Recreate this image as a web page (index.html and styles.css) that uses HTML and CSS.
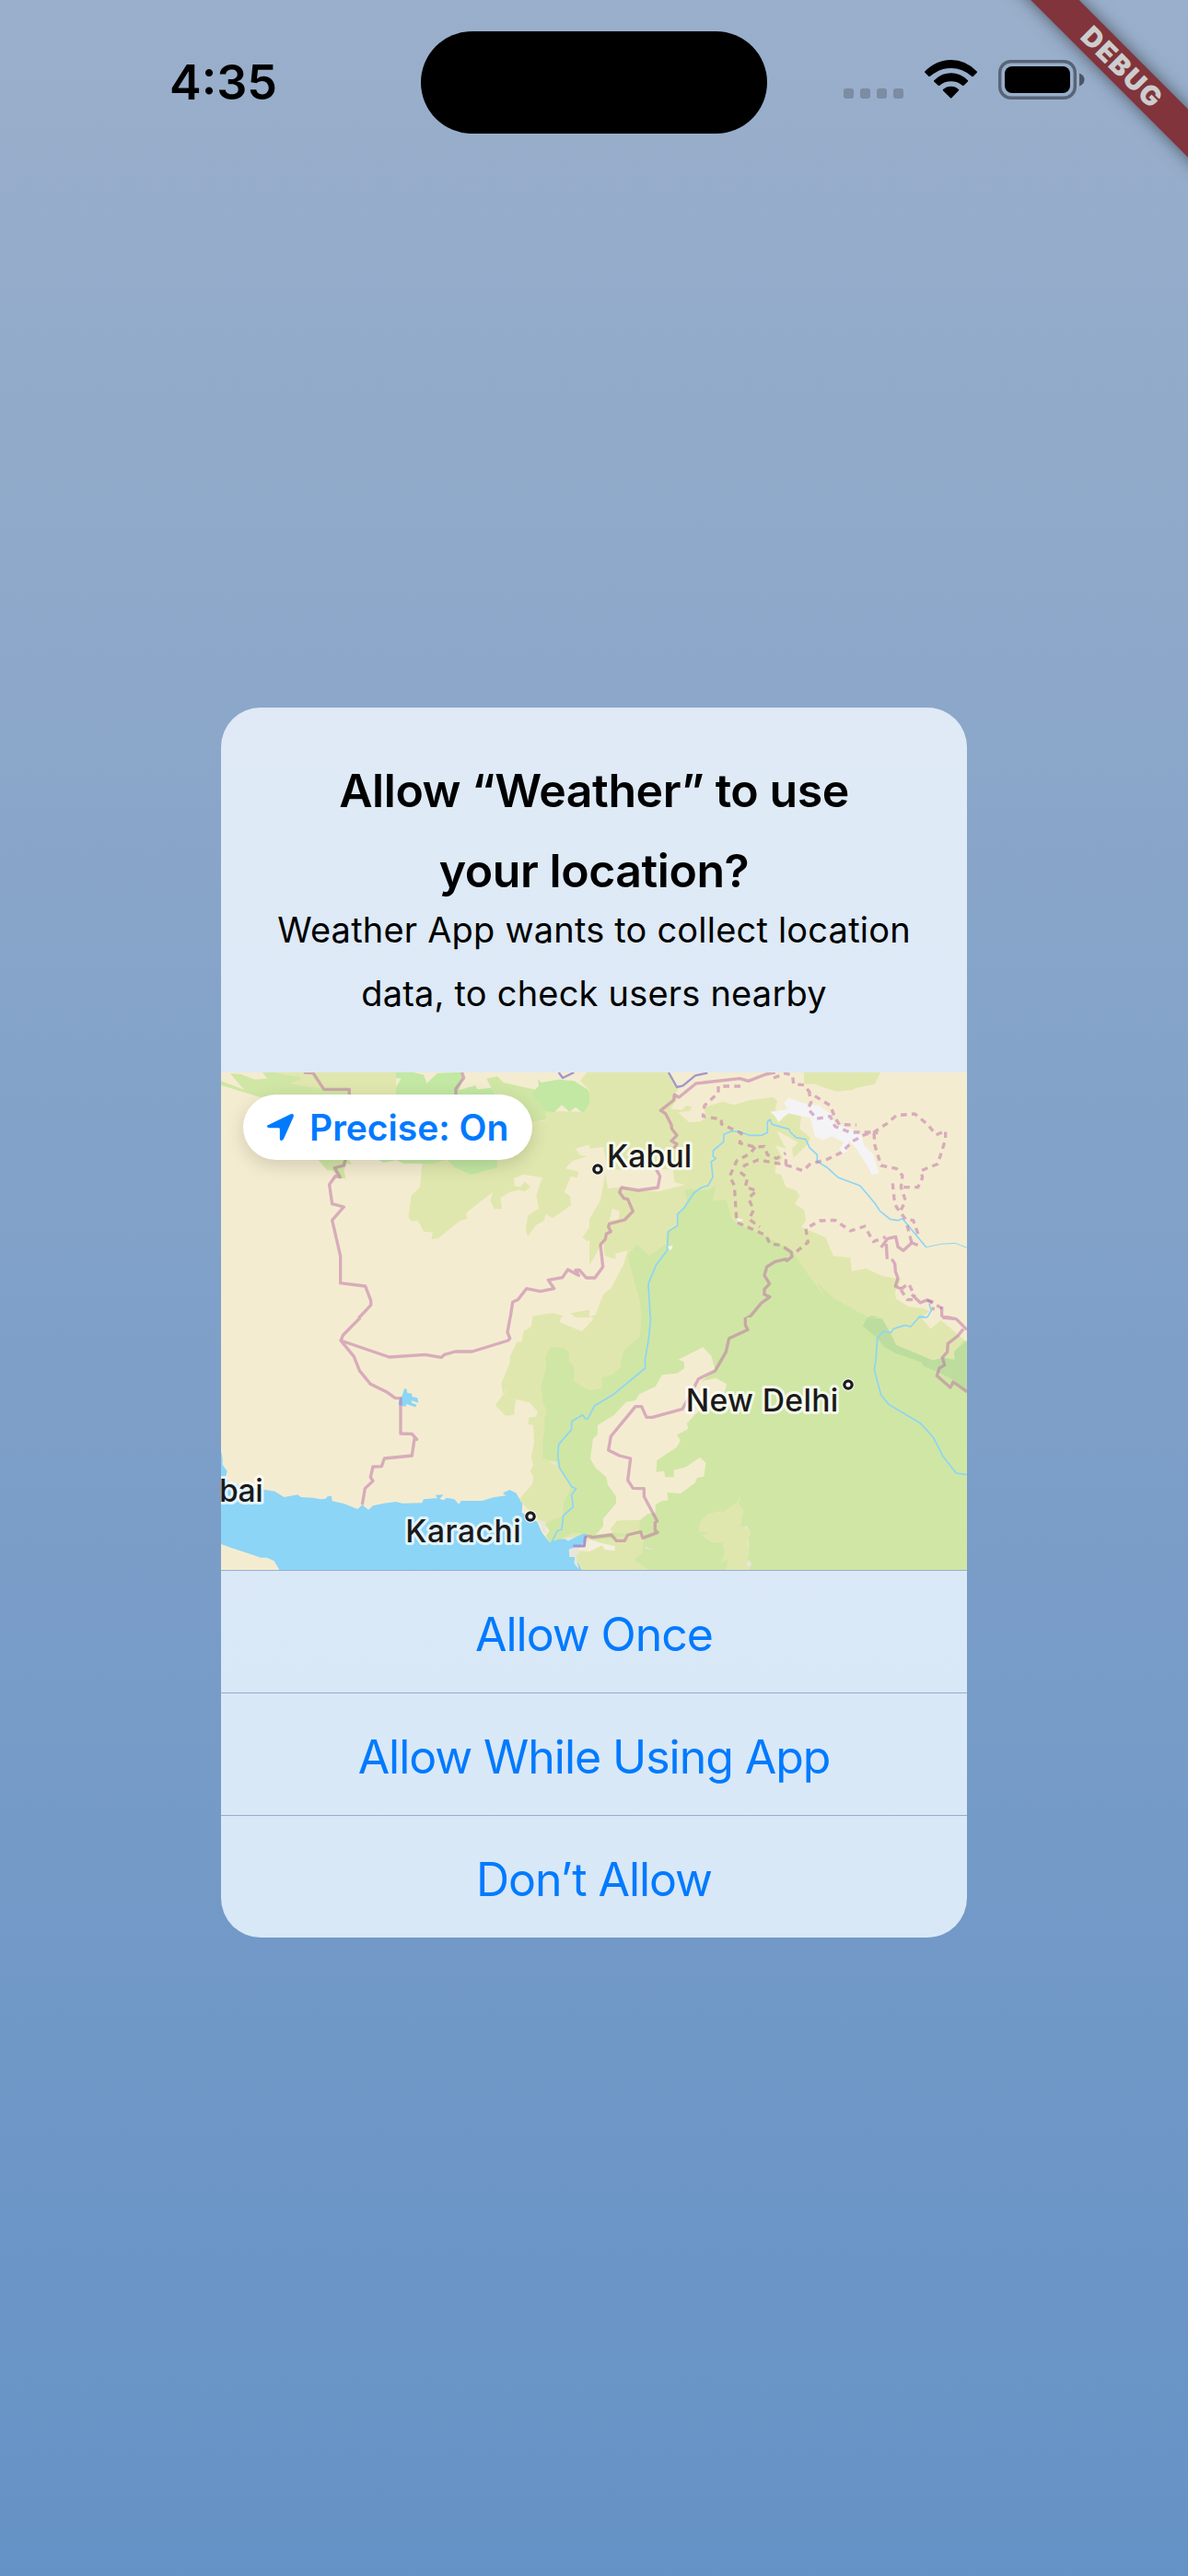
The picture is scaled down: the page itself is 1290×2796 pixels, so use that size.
FILE: index.html
```html
<!DOCTYPE html>
<html lang="en">
<head>
<meta charset="utf-8">
<title>Weather</title>
<link rel="stylesheet" href="styles.css">
</head>
<body>
<div class="screen">
  <header class="status">
    <div class="status-side"><span class="clock">4:35</span></div>
    <div class="island"></div>
    <div class="status-side status-icons">
      <svg class="signal" viewBox="0 0 65 11"><rect width="11" height="11" rx="3"/><rect x="18" width="11" height="11" rx="3"/><rect x="36" width="11" height="11" rx="3"/><rect x="54" width="11" height="11" rx="3"/></svg>
      <svg class="wifi" viewBox="0 0 171 126"><path d="M0 38Q38 0 86 0T171 38Q172 40 170 42L158 54Q156 56 154 54Q124 27 86 27T17 54Q15 55 13 53L1 41Q-1 39 0 38Z"/><path d="M31 67Q55 43 86 43T141 67Q142 69 140 71L127 84Q125 85 123 83Q107 70 86 70T49 83Q47 85 45 84L31 71Q29 69 31 67Z"/><path d="M60 96Q71 86 86 86T111 96Q113 98 111 100L88 124Q86 126 84 124L61 101Q58 98 60 96Z"/></svg>
      <svg class="battery" viewBox="0 0 94 43"><rect x="1.7" y="1.7" width="81.6" height="39.6" rx="12" fill="none" stroke="#000" stroke-opacity=".42" stroke-width="3.4"/><rect x="7" y="7" width="71" height="29" rx="8"/><path d="M88 14.5Q93.5 16.5 93.5 21.5T88 28.5Z" fill-opacity=".5"/></svg>
    </div>
  </header>
  <div class="debug"><span>DEBUG</span></div>

  <main class="dialog">
    <section class="message">
      <h1>Allow “Weather” to use<br>your location?</h1>
      <p>Weather App wants to collect location<br>data, to check users nearby</p>
    </section>

    <div class="map">
      <svg class="map-art" viewBox="30 42 2430 1620">
        <!-- north-west tile -->
        <svg width="1230" height="840" viewBox="0 0 1230 840">
          <path class="desert" d="M0 0H1230V840H0Z"/>
          <path class="green" d="M30 70 105 98 90 82 60 45 95 48 140 65 180 62 165 42H600V115L155 122 30 84Z"/>
          <path class="olive" d="M205 42H600V115H450L445 97H365L252 78 285 68 290 58 240 50ZM655 42 690 50 700 78 735 45 815 42 795 95 795 115H600L700 78Z"/>
          <path class="mint" d="M600 42H655L690 50 700 78 735 45 810 42 818 60 805 100 858 84 865 97 910 92 925 115H600V90L617 62 600 60Z"/>
          <path class="green" d="M895 62 930 55 950 75 1060 100 1090 140 1090 195 1045 205 950 113H925L910 92Z"/>
          <path class="olive" d="M1200 70 1222 42H1230V280L1222 279 1185 290 1200 312 1225 315 1175 330 1152 355 1195 365 1190 385 1170 380 1148 432 1168 445 1170 475 1110 517 1088 503 1082 525 1055 540 1030 577 1022 555 1030 508 1065 485 1057 440 1077 385 1015 374 985 387V412L1005 415 1020 398 1038 415 1020 430 1000 425 970 432 940 450 945 487H920L908 460 915 432 828 500 832 518 805 527 738 582 715 586 720 563 690 560 672 525 650 527 640 513 650 443 678 415 682 375 686 330 1000 250 1045 205 1090 197V168L1210 170 1230 100Z"/>
          <path class="mint" d="M1043 110 1065 85 1062 63 1073 75 1130 65 1180 70 1228 100 1231 140 1210 175 1185 155 1165 170 1140 148 1115 172 1090 168ZM765 325H930L928 352 845 375 790 350ZM540 325H770L720 339 625 338 600 328 560 336Z"/>
          <path class="green" d="M345 325H445L455 341 440 338 430 360 436 388H415L395 362 375 360Z"/>
          <path class="olive" d="M1230 545 1208 580 1222 592 1230 588ZM1040 840 1050 835 1110 825 1145 835 1140 840ZM1168 826 1230 815V840H1185Z"/>
          <path class="border-water" d="M1130 42 1143 60 1180 42"/>
          <path class="border" d="M300 42 330 44 365 97H448V115M815 42 821 60 795 95V114M435 326 430 345 400 353 418 383 402 380 383 407 392 470 430 480 392 523 419 640V728L500 738 518 785V800L452 870M968 870 980 790 997 782 1025 746 1070 755 1115 746 1096 718 1142 710 1160 684 1195 703 1185 686 1197 685 1220 711H1250"/>
        </svg>
        <!-- north-east tile -->
        <svg x="1230" width="1230" height="840" viewBox="0 0 1230 840">
          <path class="desert" d="M0 0H1230V840H0Z"/>
          <path class="olive" d="M0 42H258L290 92 278 118 290 122 265 160 300 165 315 150 335 155 325 168 290 172 325 205 360 202 385 185 370 160 390 150 435 137 470 148 520 133 600 122 612 135 605 165 690 185 685 225 720 255 712 275 665 320 660 290 680 270 610 232 640 290 605 280 630 320 608 345 605 370 625 375 640 415 672 425 685 445 670 470 700 490 705 525 690 545 770 580 795 640 850 645 855 690 900 680 955 705 1015 715 995 760 1000 780 1040 805 1085 810 1110 820 1080 840H0Z"/>
          <path class="olive" d="M698 42H948L930 80 870 92 855 100 805 104 760 90 735 80 700 80Z"/>
          <path class="desert" d="M0 290 45 285 60 360 220 355 272 360 278 400 310 408 225 430 140 425 110 415 60 420 52 372 35 460 0 520ZM75 485 98 495 95 520 65 525ZM0 670 45 595 50 640 85 650 85 632 125 622 110 670 70 745 45 765 20 830 0 840Z"/>
          <path class="green" d="M310 425 325 422 385 425 412 410 402 460 445 457 465 520 480 535 575 575 660 620 705 690 770 778 740 725 800 780 910 840H170L165 790 140 700 125 640 155 600 195 640 250 600 250 560 285 540 290 500 320 470Z"/>
          <path class="forest" d="M890 845 920 835 945 840 965 870Z"/>
          <path class="ice" d="M590 170 645 163 635 140 648 125 720 150 745 148 790 180 800 210 850 225 885 245 895 280 925 310 943 370 920 375 905 345 870 290 845 265 838 300 825 305 815 290 830 270 790 250 760 262 735 250 720 190 650 175 635 185 617 204 605 185ZM480 515 502 522 485 530ZM253 610 272 605 265 622Z"/>
          <path class="river" d="M200 870 192 730 217 670 253 622 257 560 287 541V503L307 485 340 435 362 418 387 410 402 383 397 333 412 322 403 315V297L437 268 438 244 460 234H485L522 247H562L580 238V203L588 195 595 211 650 227 655 237 673 254 705 260 717 287 742 310V332L775 352 810 384 882 411 930 468 947 494 980 520 1005 524 1020 518 1097 611M1107 795 1114 818 1100 840 1077 836 1047 868"/>
          <path class="river thin" d="M1097 611 1145 601 1192 598 1230 613"/>
          <path class="border-water" d="M258 42 285 90 305 85 345 52 385 44"/>
          <path class="border" d="M605 42 575 48 518 70 490 62 347 78 292 123 277 115 275 132 232 166 248 176 267 212 268 225 285 247 267 265 285 275 275 290M218 358 230 380 223 417 160 426 105 417 98 432 112 452 125 455 142 494 115 522 65 535 62 545 70 560 55 568 52 585 36 603 44 675 18 711H0M650 622 658 628 660 642 643 655 640 650 605 658 578 675 570 703 587 730 570 748V765L588 773 560 793 525 835 508 845V870M950 612 972 583 998 577 1005 610 1023 622 1050 597 1070 604M967 600 970 650M985 650 995 665 997 690 1005 712 997 738 1015 747M1050 765 1078 792 1100 783 1120 790M1148 805V835L1195 845 1225 872"/>
          <path class="border dashed" d="M492 87H420V108L375 150 370 185 430 195V210L495 240 490 272 540 285 570 283 580 310 610 322 640 305M540 285 525 305 480 330 457 380 472 410 480 530 575 572 588 600 625 605 650 622M640 325V343L550 327 505 345 495 370 515 385 508 415 545 427 518 452 535 490 520 520 555 545M640 343 695 362 720 340 775 325 820 303 860 265 900 243 940 238M600 60 640 45 662 52 665 80 700 83 720 110 785 150 800 190 815 212 870 213M715 100 722 140 712 160 740 193 785 185 800 218 850 237H940M925 238 970 208 1000 182 1060 177 1100 210 1130 245 1160 232V260L1135 340 1080 362 1085 385 1070 416H1015M927 240 930 280 950 345 1000 355 1020 378 1015 416 1030 460 1015 490M988 403 993 455 1000 480 1030 520 1055 524 1075 580M1035 540 1050 597M675 625 712 595 705 550 750 525 800 523 850 558 897 543 925 593 965 578M1015 747 1040 730 1060 770M1015 750 1035 782H1055M1100 783 1145 808 1115 812"/>
        </svg>
        <!-- south-west tile -->
        <svg y="840" width="1230" height="840" viewBox="0 0 1230 840">
          <path class="desert" d="M0 0H1230V840H0Z"/>
          <path class="olive" d="M1045 0H1138L1133 15 1205 45 1230 20V822H1205L1130 720 1060 655 1000 595 1045 540 1048 520 1037 500 1047 480 1040 455 1050 410 1047 350 1030 348 1033 325 1055 323 1062 307 1035 277 990 266 985 317 957 320 923 285 970 225 948 250 943 215 970 150 972 125 995 78 1010 80 1015 45 1040 30Z"/>
          <path class="water" d="M30 435 35 460 35 480 50 500 45 520 60 540 170 560 205 566 235 585 280 577 290 585 330 587 355 592 370 590 378 582H390L392 598 430 606 475 624 490 610 510 626 525 613 560 605 600 600 620 605 685 604 690 592 735 588 728 578 755 577 742 590 755 595 765 587 790 592 805 608 812 597 880 597 920 585 960 580 950 575 970 563 992 575 997 590 1012 605 1010 635 1060 665 1075 700 1100 732 1120 720 1165 724 1220 700 1215 745 1190 760 1183 780 1205 822H220L203 793 180 782H160L130 772 70 752 30 738Z"/>
          <path class="green" d="M1105 97 1145 98 1163 112V140L1178 155 1182 185 1178 205 1215 230 1230 235V705L1175 702 1145 718 1100 732 1088 710 1100 695 1085 668 1145 645 1145 600 1172 555 1130 490 1127 470 1078 460V400L1085 360 1083 330 1092 305 1080 280 1072 225 1090 160 1087 130 1092 115Z"/>
          <path class="ice shore" d="M1098 468 1125 472 1115 480ZM1060 657 1092 668 1084 675 1092 705 1078 700 1075 680ZM1163 755 1190 745 1205 760 1187 775 1195 820 1180 800 1183 780 1165 780ZM1150 718 1185 715 1160 728Z"/>
          <path class="desert" d="M1190 755 1218 725 1230 722V763L1205 760Z"/>
          <path class="water" d="M628 230 635 234 637 246 652 248V258L670 262 673 278 650 270 652 278 668 285 663 292 635 282 630 290 608 284 612 265 620 255Z"/>
          <path class="river" d="M950 573 970 564 990 574 1003 597M1260 278 1245 290 1225 330H1217L1208 317 1172 338V365L1130 413 1127 450 1133 490 1173 552 1187 557 1172 577 1177 617 1145 645 1140 690 1125 695 1108 730"/>
          <path class="border-water wide" d="M1177 744H1213L1217 712"/>
          <path class="border" d="M484 0 428 57 420 75 463 127 481 173 517 217 572 244 597 262 615 263V378L652 379 668 397 660 395 652 450 562 459 553 485 525 486 517 520 525 532 499 557 490 610M420 75 578 129 695 121 748 130 757 121 793 111H848L965 75 971 68 963 48 972 0M1217 712H1240"/>
        </svg>
        <!-- south-east tile -->
        <svg x="1230" y="840" width="1230" height="840" viewBox="0 0 1230 840">
          <path class="green" d="M0 0H1230V840H0Z"/>
          <path class="olive" d="M0 0H170L165 60 110 110 100 165 75 185 40 195 42 230 0 237ZM0 725 70 720 180 700 172 765 145 790 185 815 190 822H0ZM430 630 425 640 480 603 500 570 485 603 502 628 492 680 518 685 527 700 518 720 522 755 515 790 528 800 520 822H447L450 785 430 797 440 765 433 733H400L367 710 390 700 356 697 360 665 385 640ZM955 0H1230V60L1190 110V138L1150 130 1120 140 1000 90 945 15Z"/>
          <path class="desert" d="M0 0H12L10 10 0 18ZM290 137 370 97 397 125 410 172 365 208 412 197 447 217 440 245 345 315 318 345 322 362 285 383 297 400 285 422 220 465 218 503 243 500 247 520H275V497L315 487 360 455 379 473 373 518 350 522 345 538 297 573 253 570 257 595 235 598 215 610V635L190 640 165 660 90 662 68 690 80 700 20 708 45 680V655L87 605V582L60 545 55 520 20 490 3 460 12 395 27 380V350L80 318 120 275 150 270 162 250 215 225 237 187 285 182 310 165 308 145ZM1080 0H1230V80L1145 8 1112 37Z"/>
          <path class="olive" d="M95 662 165 660 162 695 120 705 80 700 68 688Z"/>
          <path class="ice shore" d="M178 745 208 757 185 753ZM502 678 517 682 515 690ZM518 790 528 800 523 812 512 808ZM518 715V740L512 745Z"/>
          <path class="desert pale" d="M0 722 40 735 83 745V760L50 755 40 742 0 763Z"/>
          <path class="forest" d="M905 0 955 5 980 50 1000 90 1060 115 1120 140 1150 130 1190 138 1188 110 1230 75V240L1180 200 1130 175 1090 160 1080 145 1000 118 960 95 935 65 890 28Z"/>
          <path class="river" d="M200 0 193 70 181 140 182 165 75 253 17 287 0 320M1100 0H1073L1047 30 1028 25 990 37 983 49 957 45 938 68 933 140 928 170 950 253 975 283 1078 344 1120 390 1153 454 1195 507 1230 512"/>
          <path class="border" d="M508 0V25L516 40 455 68 445 112 410 173 355 200 335 240 303 298 205 325H186L170 290H150L70 387 62 432 98 450 134 459 125 530 142 556 178 557V583L221 663 214 668V693L222 700 174 718 167 698 125 708 115 727H88L72 708 10 716 0 712M1150 0 1195 5 1230 40M1218 38 1200 60 1168 85 1166 112 1150 130 1157 155 1140 165 1132 190 1176 228 1185 210 1230 242"/>
        </svg>
        <g class="city-ring"><circle cx="1257" cy="357" r="20"/><circle cx="2073" cy="1059" r="20"/><circle cx="1038" cy="1488" r="20"/></g>
        <g class="city-dot"><circle cx="1257" cy="357" r="12.5"/><circle cx="2073" cy="1059" r="12.5"/><circle cx="1038" cy="1488" r="12.5"/></g>
        <g class="city">
          <text x="1287" y="350" textLength="277">Kabul</text>
          <text x="1544" y="1145" textLength="497">New Delhi</text>
          <text x="631" y="1573" textLength="376">Karachi</text>
          <text x="24" y="1440" textLength="143">bai</text>
        </g>
      </svg>
      <div class="precise">
        <svg class="arrow" viewBox="0 0 88 88"><path d="M3 37 78 1Q90-3 87 10L56 80Q53 88 47 88T42 80V50Q42 46 38 46H8Q0 46 0 41T3 37Z"/></svg>
        <span>Precise: On</span>
      </div>
    </div>

    <button class="action">Allow Once</button>
    <button class="action">Allow While Using App</button>
    <button class="action">Don’t Allow</button>
  </main>
</div>
</body>
</html>
```

FILE: styles.css
```css
* { box-sizing: border-box; }
body {
  margin: 0;
  font-family: Inter, "Liberation Sans", sans-serif;
  color: #000;
}
.screen {
  position: relative;
  width: 1290px;
  height: 2796px;
  overflow: hidden;
  display: flex;
  flex-direction: column;
  align-items: center;
  background: linear-gradient(#9aafcb, #6592c6);
}

/* status bar */
.status {
  display: grid;
  grid-template-columns: 1fr 376px 1fr;
  width: 100%;
  height: 768px;
  padding-top: 33.5px;
  align-items: start;
}
.island {
  height: 111px;
  border-radius: 56px;
  background: #000;
}
.status-side { height: 111px; display: flex; }
.clock {
  padding: 25px 0 0 184px;
  font-size: 52px;
  line-height: 62px;
  font-weight: 600;
}
.status-icons { padding: 31.5px 0 0 82.5px; align-items: flex-start; }
.signal { width: 65px; height: 11px; margin: 31px 23px 0 0; fill: #7b8ca3; }
.wifi { width: 57px; height: 42px; margin-right: 23px; }
.battery { width: 94px; height: 43px; }

/* corner ribbon */
.debug {
  position: absolute;
  left: 1067px;
  top: 53px;
  width: 300px;
  height: 36.5px;
  padding-left: 5px;
  transform: rotate(45deg);
  background: #81343b;
  box-shadow: 0 0 18px rgba(0, 0, 0, .5);
  color: #cdcdcd;
  font-size: 29.5px;
  line-height: 36px;
  font-weight: 900;
  letter-spacing: 1.8px;
  text-align: center;
}

/* permission dialog */
.dialog {
  width: 810px;
  height: 1335px;
  overflow: hidden;
  border-radius: 43px;
  background: linear-gradient(#dfeaf6, #d8e8f7);
}
.message { height: 396px; padding-top: 47px; text-align: center; }
h1 {
  margin: 0;
  font-size: 50px;
  line-height: 87px;
  font-weight: 600;
  letter-spacing: -.45px;
}
p {
  margin: -14px 0 0;
  font-size: 38px;
  line-height: 69px;
  letter-spacing: .2px;
}
.map { position: relative; height: 540px; overflow: hidden; }
.map-art { display: block; width: 810px; height: 540px; }
.desert { fill: #f4ecd0; }
.pale { fill: #f4f0e0; }
.olive { fill: #e0e7ae; }
.green { fill: #d0e6a5; }
.mint { fill: #c2e8a3; }
.forest { fill: #bddd9f; }
.ice { fill: #f4f4f6; }
.shore { fill: #e8e6dc; }
.water { fill: #8cd5f6; }
.river, .border, .border-water { fill: none; stroke-linejoin: round; }
.river { stroke: #8cd5f6; stroke-width: 5; }
.thin { stroke-width: 3; }
.border { stroke: #bc6ca6; stroke-opacity: .5; stroke-width: 10; }
.border-water { stroke: #a295cf; stroke-width: 7; }
.wide { stroke-width: 9; }
.dashed { stroke-dasharray: 20 16; }
.city {
  font-size: 101px;
  font-weight: 550;
  fill: #1a1a1a;
  stroke: #fff;
  stroke-opacity: .75;
  stroke-width: 18;
  stroke-linejoin: round;
  paint-order: stroke;
}
.city-dot { fill: #fff; stroke: #1c1c1c; stroke-width: 10; }
.city-ring { fill: #fff; }
.precise {
  position: absolute;
  left: 24px;
  top: 24px;
  width: 314px;
  height: 71px;
  padding-left: 26px;
  display: flex;
  align-items: center;
  border-radius: 36px;
  background: #fff;
  box-shadow: 0 6px 20px rgba(0, 0, 0, .14);
  color: #007aff;
  font-size: 39px;
  font-weight: 570;
  white-space: nowrap;
}
.arrow { width: 29px; height: 29px; margin-right: 17px; fill: #007aff; }
.action {
  display: block;
  width: 100%;
  height: 133px;
  padding: 6px 0 0;
  border: 0;
  border-top: 1px solid #96aed0;
  background: none;
  color: #007aff;
  font: 400 50px/126px Inter, "Liberation Sans", sans-serif;
  letter-spacing: -1.05px;
}
```
